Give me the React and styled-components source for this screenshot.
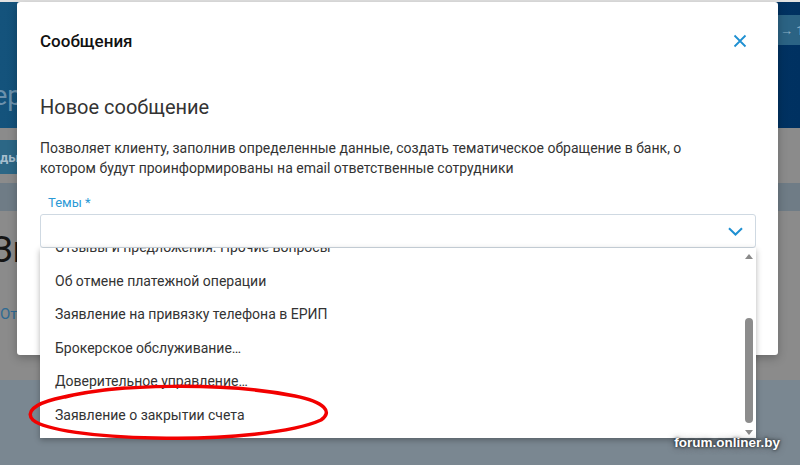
import React, { useLayoutEffect, useRef } from "react";
import styled, { createGlobalStyle } from "styled-components";

const GlobalStyle = createGlobalStyle`
  html, body {
    margin: 0;
    padding: 0;
  }
  body {
    width: 800px;
    height: 465px;
    overflow: hidden;
    font-family: Roboto, "Noto Sans", sans-serif;
  }
  * {
    box-sizing: border-box;
  }
`;

const Page = styled.div`
  position: relative;
  height: 465px;
  display: flex;
  flex-direction: column;
  background: #7a8791;
  overflow: hidden;
`;

const TopLine = styled.div`
  height: 2px;
  background: #e2e2e2;
`;

const Header = styled.header`
  height: 126px;
  display: flex;
  flex-direction: column;
  padding-top: 13px;
  background: linear-gradient(90deg, #14537c 0%, #0a426e 45%, #003161 100%);
`;

const NavRow = styled.div`
  height: 30px;
  display: flex;
  justify-content: flex-end;
`;

const NavPill = styled.div`
  width: 38px;
  padding-left: 18px;
  display: flex;
  align-items: center;
  background: #2b6384;
  color: #8eb0c5;
  font-size: 13px;
  white-space: nowrap;
  overflow: hidden;
`;

const PageTitle = styled.div`
  margin: 34px 0 0 -7px;
  font-size: 27px;
  line-height: 34px;
  color: #6c91ac;
  white-space: nowrap;
`;

const Content = styled.main`
  height: 252px;
  display: flex;
  flex-direction: column;
  padding-top: 12px;
  background: #8b8b8b;
`;

const ActionButton = styled.div`
  width: 120px;
  height: 34px;
  display: flex;
  align-items: center;
  background: #2c6786;
  color: #a7bfcf;
  font-size: 13px;
  font-weight: 700;
`;

const TabStrip = styled.div`
  height: 28px;
  margin-top: 9px;
  background: #6f7c86;
`;

const SectionTitle = styled.div`
  margin: 17px 0 0 -9px;
  font-size: 36px;
  line-height: 44px;
  color: #151515;
  white-space: nowrap;
`;

const SectionLink = styled.div`
  margin-top: 33px;
  font-size: 15px;
  color: #2f6a93;
  white-space: nowrap;
`;

const Footer = styled.footer`
  flex: 1;
  background: #7a8791;
`;

const Modal = styled.div`
  position: absolute;
  top: 2px;
  left: 17px;
  width: 761px;
  height: 353px;
  background: #fff;
  border-radius: 3px;
  box-shadow: 0 3px 10px rgba(0, 0, 0, 0.25);
`;

const ModalHeader = styled.div`
  height: 78px;
  display: flex;
  align-items: center;
  justify-content: space-between;
  padding: 0 31px 0 23px;
`;

const ModalTitle = styled.h2`
  margin: 0;
  font-size: 17px;
  font-weight: 500;
  color: #111;
`;

const CloseButton = styled.button`
  display: flex;
  padding: 0;
  border: none;
  background: none;
  cursor: pointer;
`;

const ModalBody = styled.div`
  padding: 0 12px 0 23px;
`;

const FormHeading = styled.h3`
  margin: 15px 0 0;
  font-size: 20px;
  line-height: 24px;
  font-weight: 400;
  color: #333;
`;

const Description = styled.p`
  margin: 19px 0 0;
  font-size: 14px;
  line-height: 20px;
  color: #333;
  white-space: nowrap;
`;

const Field = styled.div`
  position: relative;
  margin: 17px 10px 0 0;
`;

const Label = styled.label`
  display: block;
  padding-left: 8px;
  font-size: 13px;
  line-height: 16px;
  color: #2b9ad6;
`;

const SelectBox = styled.div`
  height: 34px;
  margin-top: 3px;
  display: flex;
  align-items: center;
  justify-content: flex-end;
  padding-right: 12px;
  border: 1px solid #cfd9e2;
  border-radius: 3px;
  background: #fff;
`;

const Dropdown = styled.div`
  position: absolute;
  top: 100%;
  left: 0;
  right: 0;
  height: 190px;
  display: flex;
  background: #fff;
  box-shadow: 0 2px 6px rgba(0, 0, 0, 0.3);
  z-index: 2;
`;

const OptionList = styled.ul`
  flex: 1;
  margin: 0;
  padding: 0 0 6px;
  list-style: none;
  overflow: hidden;
`;

const Option = styled.li`
  height: 33.5px;
  display: flex;
  align-items: center;
  padding-left: 15px;
  font-size: 14px;
  color: #333;
  white-space: nowrap;
`;

const Scrollbar = styled.div`
  width: 16px;
  display: flex;
  flex-direction: column;
  align-items: center;
  padding: 6px 0 3px 1px;
`;

const Arrow = styled.span`
  width: 0;
  height: 0;
  border-left: 4px solid transparent;
  border-right: 4px solid transparent;
  ${(p) => (p.$down ? "border-top" : "border-bottom")}: 5px solid #8a8a8a;
`;

const Track = styled.div`
  flex: 1;
  display: flex;
  flex-direction: column;
  justify-content: flex-end;
  padding-bottom: 7px;
`;

const Thumb = styled.div`
  width: 8px;
  height: 105px;
  border-radius: 4px;
  background: #8c8c8c;
`;

const Annotation = styled.svg`
  position: absolute;
  left: 25px;
  top: 380px;
  overflow: visible;
  pointer-events: none;
  z-index: 3;
`;

const Watermark = styled.div`
  position: absolute;
  right: 20px;
  bottom: 15px;
  font-family: "Liberation Sans", Arial, sans-serif;
  font-size: 13.5px;
  font-weight: 700;
  color: #fff;
  text-shadow: 0 0 3px rgba(0, 0, 0, 0.85), 0 0 7px rgba(0, 0, 0, 0.5);
  z-index: 4;
`;

const topics = [
  "Отзывы и предложения. Обслуживание в отделении",
  "Отзывы и предложения. Карточные продукты",
  "Отзывы и предложения. Интернет-банкинг",
  "Отзывы и предложения. Прочие вопросы",
  "Об отмене платежной операции",
  "Заявление на привязку телефона в ЕРИП",
  "Брокерское обслуживание…",
  "Доверительное управление…",
  "Заявление о закрытии счета",
];

const CloseIcon = () => (
  <svg width="14" height="14" viewBox="0 0 14 14">
    <path d="M1.5 1.5 12.5 12.5M12.5 1.5 1.5 12.5" stroke="#1f90d2" strokeWidth="1.8" fill="none" />
  </svg>
);

const ChevronIcon = () => (
  <svg width="15" height="9" viewBox="0 0 15 9">
    <path d="M1 1.2 7.5 7.5 14 1.2" stroke="#1f90d2" strokeWidth="2" fill="none" />
  </svg>
);

export default function App() {
  const listRef = useRef(null);

  // the open list is scrolled near its end
  useLayoutEffect(() => {
    if (listRef.current) listRef.current.scrollTop = 3 * 33.5 + 17;
  }, []);

  return (
    <>
      <GlobalStyle />
      <Page>
        <TopLine />
        <Header>
          <NavRow>
            <NavPill>→ 1</NavPill>
          </NavRow>
          <PageTitle>ерации</PageTitle>
        </Header>
        <Content>
          <ActionButton>ды</ActionButton>
          <TabStrip />
          <SectionTitle>Зк</SectionTitle>
          <SectionLink>От</SectionLink>
        </Content>
        <Footer />

        <Modal>
          <ModalHeader>
            <ModalTitle>Сообщения</ModalTitle>
            <CloseButton>
              <CloseIcon />
            </CloseButton>
          </ModalHeader>
          <ModalBody>
            <FormHeading>Новое сообщение</FormHeading>
            <Description>
              Позволяет клиенту, заполнив определенные данные, создать тематическое обращение в банк, о
              <br />
              котором будут проинформированы на email ответственные сотрудники
            </Description>
            <Field>
              <Label>Темы *</Label>
              <SelectBox>
                <ChevronIcon />
              </SelectBox>
              <Dropdown>
                <OptionList ref={listRef}>
                  {topics.map((t) => (
                    <Option key={t}>{t}</Option>
                  ))}
                </OptionList>
                <Scrollbar>
                  <Arrow />
                  <Track>
                    <Thumb />
                  </Track>
                  <Arrow $down />
                </Scrollbar>
              </Dropdown>
            </Field>
          </ModalBody>
        </Modal>

        <Annotation width="310" height="62" viewBox="0 0 310 62">
          <path
            d="M40 17 C90 4 200 2 270 16 C300 22 308 32 296 40 C270 52 200 60 130 58 C70 57 20 50 8 40 C0 32 10 24 30 19 C50 14 75 10 100 8"
            stroke="#f20000"
            strokeWidth="3.5"
            fill="none"
            strokeLinecap="round"
          />
        </Annotation>
        <Watermark>forum.onliner.by</Watermark>
      </Page>
    </>
  );
}
